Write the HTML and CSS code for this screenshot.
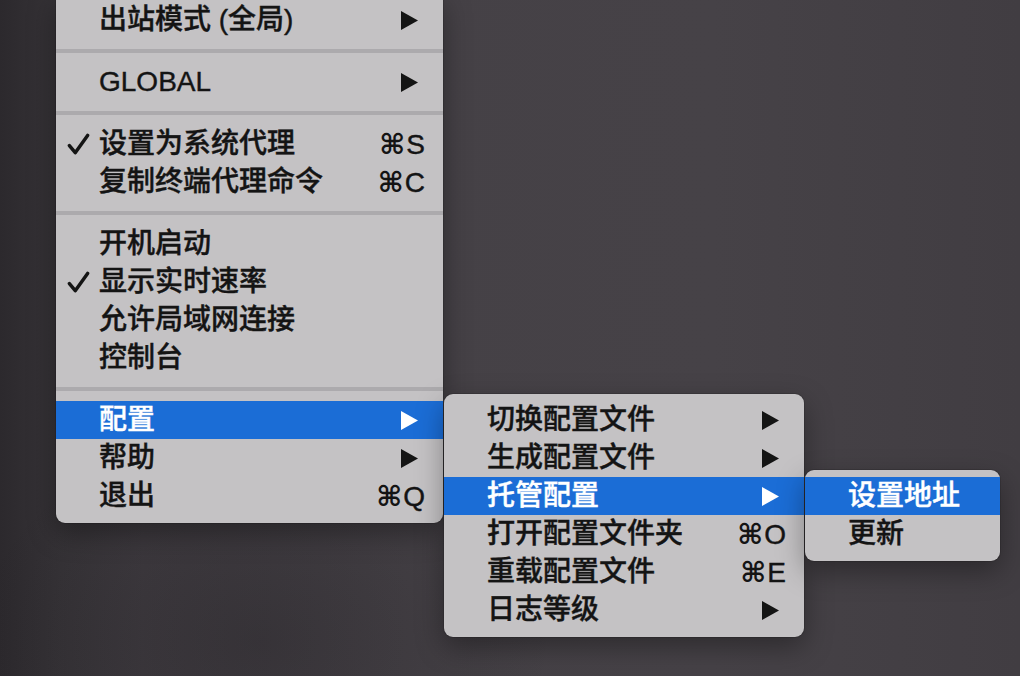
FILE: index.html
```html
<!DOCTYPE html>
<html lang="zh-CN">
<head>
<meta charset="utf-8">
<title>菜单</title>
<link rel="stylesheet" href="styles.css">
</head>
<body>
<div class="desktop">
  <div class="menu menu-main">
    <div class="row"><span class="chk"></span><span class="label">出站模式 (全局)</span><svg class="arrow" viewBox="0 0 17 19"><polygon points="0,0 17,9.5 0,19"/></svg></div>
    <div class="sep"></div>
    <div class="row"><span class="chk"></span><span class="label">GLOBAL</span><svg class="arrow" viewBox="0 0 17 19"><polygon points="0,0 17,9.5 0,19"/></svg></div>
    <div class="sep"></div>
    <div class="row"><span class="chk"><svg viewBox="0 0 24 24"><path d="M2.5 13.2 L8.6 20.5 L21.5 2.5"/></svg></span><span class="label">设置为系统代理</span><span class="key"><span class="cmd">⌘</span>S</span></div>
    <div class="row"><span class="chk"></span><span class="label">复制终端代理命令</span><span class="key"><span class="cmd">⌘</span>C</span></div>
    <div class="sep"></div>
    <div class="row"><span class="chk"></span><span class="label">开机启动</span></div>
    <div class="row"><span class="chk"><svg viewBox="0 0 24 24"><path d="M2.5 13.2 L8.6 20.5 L21.5 2.5"/></svg></span><span class="label">显示实时速率</span></div>
    <div class="row"><span class="chk"></span><span class="label">允许局域网连接</span></div>
    <div class="row"><span class="chk"></span><span class="label">控制台</span></div>
    <div class="sep"></div>
    <div class="row active"><span class="chk"></span><span class="label">配置</span><svg class="arrow" viewBox="0 0 17 19"><polygon points="0,0 17,9.5 0,19"/></svg></div>
    <div class="row"><span class="chk"></span><span class="label">帮助</span><svg class="arrow" viewBox="0 0 17 19"><polygon points="0,0 17,9.5 0,19"/></svg></div>
    <div class="row"><span class="chk"></span><span class="label">退出</span><span class="key"><span class="cmd">⌘</span>Q</span></div>
  </div>

  <div class="menu menu-sub1">
    <div class="row"><span class="chk"></span><span class="label">切换配置文件</span><svg class="arrow" viewBox="0 0 17 19"><polygon points="0,0 17,9.5 0,19"/></svg></div>
    <div class="row"><span class="chk"></span><span class="label">生成配置文件</span><svg class="arrow" viewBox="0 0 17 19"><polygon points="0,0 17,9.5 0,19"/></svg></div>
    <div class="row active"><span class="chk"></span><span class="label">托管配置</span><svg class="arrow" viewBox="0 0 17 19"><polygon points="0,0 17,9.5 0,19"/></svg></div>
    <div class="row"><span class="chk"></span><span class="label">打开配置文件夹</span><span class="key"><span class="cmd">⌘</span>O</span></div>
    <div class="row"><span class="chk"></span><span class="label">重载配置文件</span><span class="key"><span class="cmd">⌘</span>E</span></div>
    <div class="row"><span class="chk"></span><span class="label">日志等级</span><svg class="arrow" viewBox="0 0 17 19"><polygon points="0,0 17,9.5 0,19"/></svg></div>
  </div>

  <div class="menu menu-sub2">
    <div class="row active"><span class="chk"></span><span class="label">设置地址</span></div>
    <div class="row"><span class="chk"></span><span class="label">更新</span></div>
  </div>
</div>
</body>
</html>
```

FILE: styles.css
```css
html, body {
  margin: 0;
  padding: 0;
  width: 1020px;
  height: 676px;
  overflow: hidden;
}

body {
  font-family: "Liberation Sans", "Noto Sans CJK SC", sans-serif;
  font-size: 28px;
  font-weight: 500;
  color: #141414;
  -webkit-text-stroke: 0.4px currentColor;
}

.desktop {
  position: relative;
  width: 1020px;
  height: 676px;
  background:
    radial-gradient(ellipse 420px 300px at 260px 640px, rgba(20, 18, 22, 0.25), rgba(20, 18, 22, 0) 70%),
    linear-gradient(90deg, #2c292d 0%, #363337 6%, #3f3b40 14%, #454146 40%, #464247 70%, #413d42 100%);
}

.menu {
  position: absolute;
  background: #c4c2c4;
  border-radius: 9px;
  box-shadow: 0 10px 28px rgba(0, 0, 0, 0.35), 0 0 0 1px rgba(0, 0, 0, 0.12);
  padding: 7px 0 8px;
}

.menu-main {
  left: 56px;
  top: -6px;
  width: 387px;
  border-top-left-radius: 0;
  border-top-right-radius: 0;
}

.menu-sub1 {
  left: 444px;
  top: 394px;
  width: 360px;
}

.menu-sub2 {
  left: 805px;
  top: 470px;
  width: 195px;
}

.row {
  display: flex;
  align-items: center;
  height: 38px;
  padding: 0 18px 0 11px;
  white-space: nowrap;
}

.row.active {
  background: #1b6dd6;
  color: #ffffff;
}

.chk {
  width: 32px;
  flex: none;
  display: flex;
  align-items: center;
}

.chk svg {
  width: 23px;
  height: 23px;
  fill: none;
  stroke: #141414;
  stroke-width: 3.6;
  stroke-linecap: round;
  stroke-linejoin: round;
}

.label {
  flex: 1;
  line-height: 38px;
}

.arrow {
  width: 17px;
  height: 19px;
  margin-right: 7px;
  fill: #141414;
  flex: none;
}

.row.active .arrow {
  fill: #ffffff;
}

.key {
  flex: none;
  font-family: "Liberation Sans", sans-serif;
  font-size: 28px;
}

.cmd {
  font-family: "DejaVu Sans", sans-serif;
  font-size: 28px;
  font-weight: 700;
  display: inline-block;
  margin-right: 1px;
  -webkit-text-stroke: 0;
}

.sep {
  height: 24px;
  display: flex;
  align-items: center;
}

.sep::before {
  content: "";
  display: block;
  width: 100%;
  height: 4px;
  background: #acaaad;
}
```
